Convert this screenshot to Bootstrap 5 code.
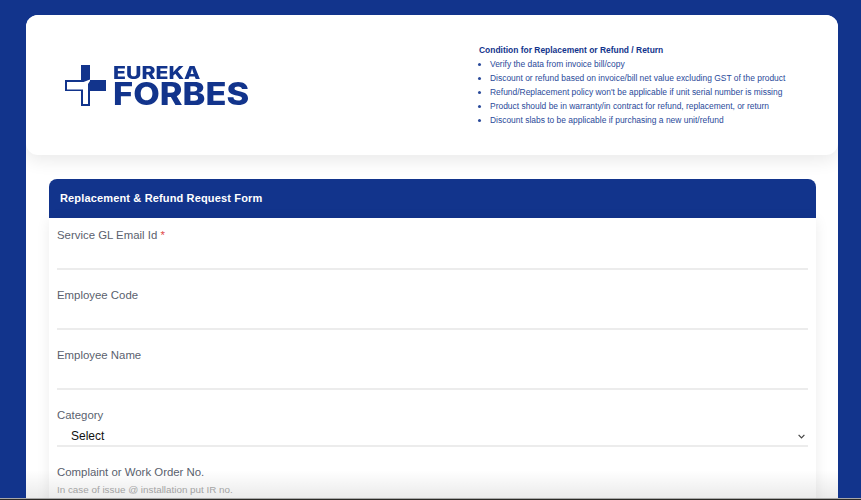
<!DOCTYPE html>
<html lang="en">
<head>
<meta charset="utf-8">
<title>Replacement &amp; Refund Request Form</title>
<link rel="stylesheet" href="https://cdn.jsdelivr.net/npm/bootstrap@5.3.0/dist/css/bootstrap.min.css">
<style>
html,body{height:500px;overflow:hidden}
body{background:#12348c;font-family:"Liberation Sans",Arial,sans-serif;color:#12348c}
.sheet{margin:15px 23px 0 26px;height:483px;background:#fff;border-radius:12px 12px 0 0;overflow:hidden;position:relative}
.sheet::after{content:"";position:absolute;left:0;right:0;bottom:0;height:28px;background:linear-gradient(rgba(0,0,0,0),rgba(0,0,0,.08));pointer-events:none}
.top-card{height:140px;border-radius:0 0 12px 12px;box-shadow:0 5px 18px rgba(0,0,0,.09);padding-left:39px;padding-right:0}
.logo{width:182px;flex:none;filter:blur(.3px)}
.logo svg{display:block;width:41px;height:41px;flex:none}
.logo-words{font-family:"Inter",sans-serif;color:#12348c;margin-left:7px}
.word-a,.word-b{transform-origin:left center}
.word-a{font-size:18px;font-weight:800;line-height:17px;transform:scaleX(1.18)}
.word-b{font-size:31px;font-weight:800;line-height:25px;transform:scaleX(1.11)}
.notes{margin-left:232px;font-size:8.45px;line-height:14px}
.notes-title{font-weight:700}
.notes ul{padding-left:11px;margin:0;color:#2a4a9a}
.form-wrap{margin:24px 22px 0 23px}
.form-head{background:#12348c;color:#fff;height:39px;border-radius:8px 8px 0 0;padding:0 11px;font-size:11px;font-weight:700;line-height:39px;letter-spacing:.15px}
.form-body{padding:0 8px;box-shadow:0 2px 14px rgba(0,0,0,.08);height:300px;border-radius:0 0 8px 8px}
.fld{height:60px;padding-top:9px}
.fld .form-label{display:block;margin:0;font-size:11.4px;line-height:16px;color:#5a5f6e}
.fld .form-control,.fld .form-select{border:0;border-bottom:2px solid #ececec;border-radius:0;box-shadow:none;background-color:transparent}
.fld .form-control{height:27px;padding:0;font-size:11.4px}
.fld .form-select{height:28px;margin-top:-4px;padding:10px 14px 4px;font-size:12px;line-height:14px;color:#111;font-family:inherit;background-image:url("data:image/svg+xml,%3csvg xmlns='http://www.w3.org/2000/svg' viewBox='0 0 7 5'%3e%3cpath fill='none' stroke='%23444' stroke-width='1.2' d='M.6.8 3.500 3.800 6.400.8'/%3e%3c/svg%3e");background-size:7px 5px;background-position:right 3px top 15px}
.fld-select{height:57px}
.req{color:#e04848}
.hint{font-size:9.85px;line-height:12px;color:#adadad;margin-top:4px}
.edge{position:fixed;left:0;right:0;bottom:0;height:2px;background:linear-gradient(#a8a8a8 50%,#2b2a26 50%)}
</style>
</head>
<body>
<main class="sheet">
  <header class="top-card d-flex align-items-center bg-white">
    <div class="logo d-flex align-items-center">
      <svg viewBox="0 0 41 41" aria-hidden="true">
        <path fill="#12348c" d="M16 0h9v15h16v11H25v15H16V26H0V15h16z"/>
        <path fill="#fff" d="M2 17H18.500L25 14.500V16L23 19V39H18V24.500H2z"/>
      </svg>
      <div class="logo-words">
        <div class="word-a">EUREKA</div>
        <div class="word-b">FORBES</div>
      </div>
    </div>
    <div class="notes">
      <div class="notes-title">Condition for Replacement or Refund / Return</div>
      <ul>
        <li>Verify the data from invoice bill/copy</li>
        <li>Discount or refund based on invoice/bill net value excluding GST of the product</li>
        <li>Refund/Replacement policy won't be applicable if unit serial number is missing</li>
        <li>Product should be in warranty/in contract for refund, replacement, or return</li>
        <li>Discount slabs to be applicable if purchasing a new unit/refund</li>
      </ul>
    </div>
  </header>
  <section class="form-wrap">
    <div class="form-head">Replacement &amp; Refund Request Form</div>
    <form class="form-body bg-white">
      <div class="fld"><label class="form-label" for="f1">Service GL Email Id <span class="req">*</span></label><input class="form-control" id="f1" type="email"></div>
      <div class="fld"><label class="form-label" for="f2">Employee Code</label><input class="form-control" id="f2" type="text"></div>
      <div class="fld"><label class="form-label" for="f3">Employee Name</label><input class="form-control" id="f3" type="text"></div>
      <div class="fld fld-select"><label class="form-label" for="f4">Category</label><select class="form-select" id="f4"><option>Select</option></select></div>
      <div class="fld"><label class="form-label">Complaint or Work Order No.</label><div class="hint">In case of issue @ installation put IR no.</div></div>
    </form>
  </section>
</main>
<div class="edge"></div>
<script src="https://cdn.jsdelivr.net/npm/bootstrap@5.3.0/dist/js/bootstrap.bundle.min.js"></script>
</body>
</html>
